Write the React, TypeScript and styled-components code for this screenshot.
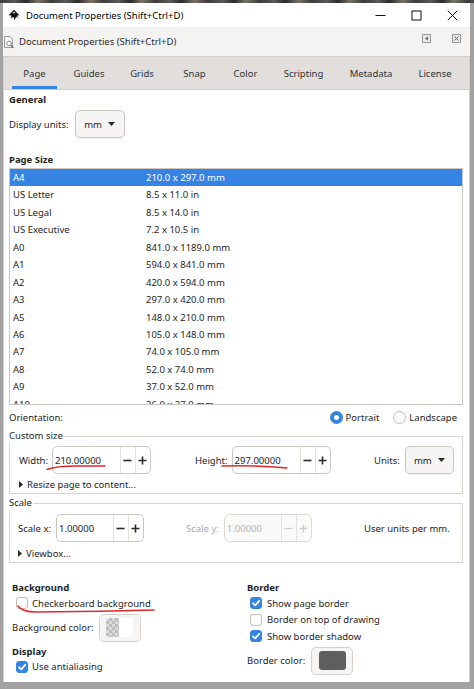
import React from "react";
import styled, { createGlobalStyle } from "styled-components";

const Global = createGlobalStyle`
  html, body { margin: 0; padding: 0; }
  body {
    width: 474px; height: 689px; overflow: hidden;
    background: #a2a2a2;
    font-family: "Noto Sans", "Open Sans", sans-serif;
    font-size: 9.5px;
    color: #1e1e1e;
  }
  #root { width: 474px; height: 689px; }
`;

const Screen = styled.div`
  position: relative;
  width: 474px;
  height: 689px;
  display: flex;
  flex-direction: column;
  background: #a2a2a2;
`;

const BackdropStrip = styled.div`
  height: 3px;
  flex: none;
  background: repeating-linear-gradient(
    90deg,
    #3c3c3c 0px, #5a5a5a 14px, #2a2a2a 26px, #7a7466 38px, #3a3a3a 52px
  );
`;

const Window = styled.div`
  flex: 1;
  min-height: 0;
  margin: 0 4px 7px 3px;
  display: flex;
  flex-direction: column;
  background: #fff;
`;

const TitleBar = styled.div`
  height: 24px;
  flex: none;
  display: flex;
  align-items: center;
  padding-left: 5px;
  background: #fff;
  color: #000;
`;

const TitleText = styled.span`
  margin-left: 6px;
  flex: 1;
`;

const WinControl = styled.div`
  width: 36px;
  height: 24px;
  display: flex;
  align-items: center;
  justify-content: center;
`;

const DockHeader = styled.div`
  height: 29px;
  flex: none;
  display: flex;
  align-items: center;
  background: #f4f3f2;
  padding-left: 0px;
  color: #2a2a2a;
`;

const DockTitle = styled.span`
  margin-left: 3px;
  flex: 1;
`;

const DockButton = styled.div<{ $gap: number }>`
  width: 9px;
  height: 9px;
  box-sizing: border-box;
  border: 1px solid #9c9a98;
  background: #e9e8e7;
  align-self: flex-start;
  margin-top: 7px;
  margin-right: ${(p) => p.$gap}px;
  display: flex;
  align-items: center;
  justify-content: center;
`;

const Notebook = styled.div`
  flex: 1;
  min-height: 0;
  display: flex;
  flex-direction: column;
  border: 1px solid #d3cfcb;
  border-bottom: none;
`;

const TabBar = styled.div`
  height: 33px;
  flex: none;
  display: flex;
  padding-left: 8px;
  background: #e1dedb;
  border-bottom: 1px solid #d3cfcb;
  box-sizing: border-box;
`;

const Tab = styled.div<{ $w: number; $active?: boolean }>`
  width: ${(p) => p.$w}px;
  flex: none;
  box-sizing: border-box;
  display: flex;
  align-items: center;
  justify-content: center;
  color: #2e3436;
  border-bottom: 3px solid ${(p) => (p.$active ? "#3584e4" : "transparent")};
  padding-top: 3px;
`;

const Content = styled.div`
  flex: 1;
  min-height: 0;
  display: flex;
  flex-direction: column;
  padding: 0 6px 0 5px;
  background: #fff;
`;

const Heading = styled.div<{ $mt: number }>`
  font-weight: 700;
  line-height: 14px;
  margin-top: ${(p) => p.$mt}px;
  color: #1e1e1e;
`;

const Row = styled.div<{ $mt?: number; $h: number; $gap?: number }>`
  display: flex;
  align-items: center;
  height: ${(p) => p.$h}px;
  margin-top: ${(p) => p.$mt ?? 0}px;
  gap: ${(p) => p.$gap ?? 0}px;
`;

const Button = styled.div<{ $w: number }>`
  width: ${(p) => p.$w}px;
  height: 28px;
  box-sizing: border-box;
  border: 1px solid #cdc7c2;
  border-radius: 5px;
  background: #f6f5f4;
  box-shadow: 0 1px 1px rgba(0, 0, 0, 0.06);
  display: flex;
  align-items: center;
  justify-content: center;
  gap: 6px;
  color: #222;
`;

const ListBox = styled.div`
  margin-top: 1px;
  height: 237px;
  flex: none;
  box-sizing: border-box;
  border: 1px solid #cdc7c2;
  overflow: hidden;
  background: #fff;
`;

const ListRow = styled.div<{ $selected?: boolean }>`
  height: 17.45px;
  line-height: 17.45px;
  display: grid;
  grid-template-columns: 133px 1fr;
  padding-left: 3px;
  background: ${(p) => (p.$selected ? "#3584e4" : "transparent")};
  color: ${(p) => (p.$selected ? "#fff" : "#1e1e1e")};
`;

const OrientationRow = styled.div`
  height: 24px;
  display: flex;
  align-items: center;
  padding-right: 6px;
`;

const Spacer = styled.div`
  flex: 1;
`;

const RadioItem = styled.div<{ $ml?: number }>`
  display: flex;
  align-items: center;
  gap: 3px;
  margin-left: ${(p) => p.$ml ?? 0}px;
`;

const Radio = styled.div<{ $checked?: boolean }>`
  width: 13px;
  height: 13px;
  box-sizing: border-box;
  border-radius: 50%;
  background: #fff;
  border: ${(p) => (p.$checked ? "4px solid #3584e4" : "1px solid #c3bdb8")};
`;

const Frame = styled.fieldset<{ $mt: number; $pt: number; $pb: number; $pl: number }>`
  margin: ${(p) => p.$mt}px 0 0 0;
  padding: ${(p) => p.$pt}px 0 ${(p) => p.$pb}px ${(p) => p.$pl}px;
  border: 1px solid #dad6d2;
  min-width: 0;
`;

const FrameLabel = styled.legend<{ $offset: number }>`
  padding: 0 1px 0 0;
  margin-left: ${(p) => p.$offset}px;
  line-height: 14px;
  color: #1e1e1e;
`;

const FieldGrid = styled.div<{ $cols: string }>`
  display: grid;
  grid-template-columns: ${(p) => p.$cols};
  align-items: center;
  height: 28px;
`;

const Field = styled.div<{ $gap: number }>`
  display: flex;
  align-items: center;
  gap: ${(p) => p.$gap}px;
`;

const FieldLabel = styled.span<{ $disabled?: boolean }>`
  color: ${(p) => (p.$disabled ? "#a9a9a9" : "#1e1e1e")};
  white-space: nowrap;
`;

const Entry = styled.div<{ $w: number; $disabled?: boolean }>`
  width: ${(p) => p.$w}px;
  height: 28px;
  box-sizing: border-box;
  border: 1px solid ${(p) => (p.$disabled ? "#dedad6" : "#cdc7c2")};
  border-radius: 5px;
  background: ${(p) => (p.$disabled ? "#fafaf9" : "#fff")};
  display: flex;
`;

const EntryText = styled.div<{ $disabled?: boolean }>`
  flex: 1;
  display: flex;
  align-items: center;
  padding-left: 2px;
  color: ${(p) => (p.$disabled ? "#b4b4b4" : "#1e1e1e")};
`;

const Spin = styled.div`
  width: 14px;
  flex: none;
  display: flex;
  align-items: center;
  justify-content: center;
  border-left: 1px solid #e6e2de;
`;

const Expander = styled.div<{ $mt: number }>`
  margin-top: ${(p) => p.$mt}px;
  height: 14px;
  display: flex;
  align-items: center;
  gap: 4px;
  color: #1e1e1e;
`;

const Columns = styled.div`
  display: grid;
  grid-template-columns: 235px 1fr;
  margin-top: 18px;
  padding-left: 3px;
`;

const Column = styled.div`
  display: flex;
  flex-direction: column;
`;

const CheckRow = styled.div<{ $indent: number; $gap: number }>`
  height: 16.5px;
  display: flex;
  align-items: center;
  padding-left: ${(p) => p.$indent}px;
  gap: ${(p) => p.$gap}px;
`;

const Check = styled.div<{ $checked?: boolean }>`
  width: 12px;
  height: 12px;
  box-sizing: border-box;
  border-radius: 3px;
  flex: none;
  display: flex;
  align-items: center;
  justify-content: center;
  background: ${(p) => (p.$checked ? "#3584e4" : "#fff")};
  border: 1px solid ${(p) => (p.$checked ? "#3584e4" : "#c3bdb8")};
`;

const ColorButton = styled.div`
  width: 42px;
  height: 28px;
  box-sizing: border-box;
  border: 1px solid #d6d1cc;
  border-radius: 5px;
  background: #f6f5f4;
  display: flex;
  align-items: center;
  justify-content: center;
`;

const Swatch = styled.div<{ $color?: string }>`
  width: 27px;
  height: 19px;
  border-radius: 3px;
  background: ${(p) =>
    p.$color
      ? p.$color
      : `linear-gradient(90deg, transparent 50%, #fff 50%),
         repeating-conic-gradient(#bdbdbd 0% 25%, #d9d9d9 0% 50%) 0 0 / 6px 6px`};
`;

const Annotations = styled.svg`
  position: absolute;
  left: 0;
  top: 0;
  width: 474px;
  height: 689px;
  pointer-events: none;
`;

const Minus = () => (
  <svg width="9" height="9" viewBox="0 0 9 9">
    <path d="M0.5 4.5 H8.5" stroke="#2a2a2a" strokeWidth="1.6" />
  </svg>
);
const Plus = () => (
  <svg width="9" height="9" viewBox="0 0 9 9">
    <path d="M0.5 4.5 H8.5 M4.5 0.5 V8.5" stroke="#2a2a2a" strokeWidth="1.6" />
  </svg>
);
const DisabledMinus = () => (
  <svg width="9" height="9" viewBox="0 0 9 9">
    <path d="M0.5 4.5 H8.5" stroke="#cfcfcf" strokeWidth="1.4" />
  </svg>
);
const DisabledPlus = () => (
  <svg width="9" height="9" viewBox="0 0 9 9">
    <path d="M0.5 4.5 H8.5 M4.5 0.5 V8.5" stroke="#cfcfcf" strokeWidth="1.4" />
  </svg>
);

const DropArrow = () => (
  <svg width="7" height="4" viewBox="0 0 7 4">
    <path d="M0 0 H7 L3.5 4 Z" fill="#2a2a2a" />
  </svg>
);

const RightTriangle = () => (
  <svg width="4" height="7" viewBox="0 0 4 7">
    <path d="M0 0 L4 3.5 L0 7 Z" fill="#2a2a2a" />
  </svg>
);

const CheckMark = () => (
  <svg width="10" height="10" viewBox="0 0 10 10">
    <path d="M2 5.3 L4.2 7.4 L8.2 2.8" stroke="#fff" strokeWidth="1.8" fill="none" strokeLinecap="round" strokeLinejoin="round" />
  </svg>
);

const InkscapeLogo = () => (
  <svg width="12" height="12" viewBox="0 0 12 12">
    <path d="M6 0.8 L11.4 6.2 L9.2 6.4 L9.8 9.4 L8.1 7.6 L6.6 11.3 L5.4 7.8 L3 9.6 L3.4 6.6 L0.6 6.2 Z" fill="#111" />
    <path d="M6 2.4 L7.6 4.2 L6.6 4 L6 4.8 L5.3 4 L4.4 4.2 Z" fill="#fff" />
  </svg>
);

const DockIcon = () => (
  <svg width="13" height="14" viewBox="0 0 13 14">
    <path d="M1.5 1.5 H7 L9.5 4 V12.5 H1.5 Z" fill="#fafafa" stroke="#9a9a9a" />
    <circle cx="6" cy="8.5" r="2.3" fill="none" stroke="#8a8a8a" strokeWidth="1" />
    <path d="M7.7 10.2 L10.5 13" stroke="#777" strokeWidth="1.4" />
  </svg>
);

const MinimizeIcon = () => (
  <svg width="11" height="11" viewBox="0 0 11 11">
    <path d="M0.5 5.5 H10.5" stroke="#111" strokeWidth="1" />
  </svg>
);
const MaximizeIcon = () => (
  <svg width="11" height="11" viewBox="0 0 11 11">
    <rect x="1" y="1" width="9" height="9" fill="none" stroke="#111" strokeWidth="1" />
  </svg>
);
const CloseIcon = () => (
  <svg width="11" height="11" viewBox="0 0 11 11">
    <path d="M0.8 0.8 L10.2 10.2 M10.2 0.8 L0.8 10.2" stroke="#111" strokeWidth="1" />
  </svg>
);

const DockLeftGlyph = () => (
  <svg width="5" height="5" viewBox="0 0 5 5">
    <path d="M4 0.5 L1 2.5 L4 4.5 Z" fill="#666" />
  </svg>
);
const DockCloseGlyph = () => (
  <svg width="5" height="5" viewBox="0 0 5 5">
    <path d="M0.5 0.5 L4.5 4.5 M4.5 0.5 L0.5 4.5" stroke="#666" strokeWidth="1" />
  </svg>
);

const tabs = [
  { label: "Page", w: 45, active: true },
  { label: "Guides", w: 64 },
  { label: "Grids", w: 42 },
  { label: "Snap", w: 63 },
  { label: "Color", w: 39 },
  { label: "Scripting", w: 77 },
  { label: "Metadata", w: 58 },
  { label: "License", w: 70 },
];

const sizes: [string, string][] = [
  ["A4", "210.0 x 297.0 mm"],
  ["US Letter", "8.5 x 11.0 in"],
  ["US Legal", "8.5 x 14.0 in"],
  ["US Executive", "7.2 x 10.5 in"],
  ["A0", "841.0 x 1189.0 mm"],
  ["A1", "594.0 x 841.0 mm"],
  ["A2", "420.0 x 594.0 mm"],
  ["A3", "297.0 x 420.0 mm"],
  ["A5", "148.0 x 210.0 mm"],
  ["A6", "105.0 x 148.0 mm"],
  ["A7", "74.0 x 105.0 mm"],
  ["A8", "52.0 x 74.0 mm"],
  ["A9", "37.0 x 52.0 mm"],
  ["A10", "26.0 x 37.0 mm"],
];

const SpinEntry: React.FC<{ w: number; value: string; disabled?: boolean }> = ({ w, value, disabled }) => (
  <Entry $w={w} $disabled={disabled}>
    <EntryText $disabled={disabled}>{value}</EntryText>
    <Spin>{disabled ? <DisabledMinus /> : <Minus />}</Spin>
    <Spin>{disabled ? <DisabledPlus /> : <Plus />}</Spin>
  </Entry>
);

const CheckItem: React.FC<{ label: string; checked?: boolean; indent: number; gap: number }> = ({
  label,
  checked,
  indent,
  gap,
}) => (
  <CheckRow $indent={indent} $gap={gap}>
    <Check $checked={checked}>{checked && <CheckMark />}</Check>
    <span>{label}</span>
  </CheckRow>
);

export default function App() {
  return (
    <>
      <Global />
      <Screen>
        <BackdropStrip />
        <Window>
          <TitleBar>
            <InkscapeLogo />
            <TitleText>Document Properties (Shift+Ctrl+D)</TitleText>
            <WinControl>
              <MinimizeIcon />
            </WinControl>
            <WinControl>
              <MaximizeIcon />
            </WinControl>
            <WinControl>
              <CloseIcon />
            </WinControl>
          </TitleBar>
          <DockHeader>
            <DockIcon />
            <DockTitle>Document Properties (Shift+Ctrl+D)</DockTitle>
            <DockButton $gap={21}>
              <DockLeftGlyph />
            </DockButton>
            <DockButton $gap={9}>
              <DockCloseGlyph />
            </DockButton>
          </DockHeader>
          <Notebook>
            <TabBar>
              {tabs.map((t) => (
                <Tab key={t.label} $w={t.w} $active={t.active}>
                  {t.label}
                </Tab>
              ))}
            </TabBar>
            <Content>
              <Heading $mt={3}>General</Heading>
              <Row $mt={3} $h={28} $gap={6}>
                <span>Display units:</span>
                <Button $w={50}>
                  <span>mm</span>
                  <DropArrow />
                </Button>
              </Row>
              <Heading $mt={15}>Page Size</Heading>
              <ListBox>
                {sizes.map(([name, size], i) => (
                  <ListRow key={name} $selected={i === 0}>
                    <span>{name}</span>
                    <span>{size}</span>
                  </ListRow>
                ))}
              </ListBox>
              <OrientationRow>
                <span>Orientation:</span>
                <Spacer />
                <RadioItem>
                  <Radio $checked />
                  <span>Portrait</span>
                </RadioItem>
                <RadioItem $ml={14}>
                  <Radio />
                  <span>Landscape</span>
                </RadioItem>
              </OrientationRow>
              <Frame $mt={0} $pt={3} $pb={2} $pl={9}>
                <FrameLabel $offset={-10}>Custom size</FrameLabel>
                <FieldGrid $cols="176px 179px auto">
                  <Field $gap={4}>
                    <FieldLabel>Width:</FieldLabel>
                    <SpinEntry w={99} value="210.00000" />
                  </Field>
                  <Field $gap={4}>
                    <FieldLabel>Height:</FieldLabel>
                    <SpinEntry w={99} value="297.00000" />
                  </Field>
                  <Field $gap={5}>
                    <FieldLabel>Units:</FieldLabel>
                    <Button $w={49}>
                      <span>mm</span>
                      <DropArrow />
                    </Button>
                  </Field>
                </FieldGrid>
                <Expander $mt={3}>
                  <RightTriangle />
                  <span>Resize page to content...</span>
                </Expander>
              </Frame>
              <Frame $mt={2} $pt={4} $pb={2} $pl={8}>
                <FrameLabel $offset={-9}>Scale</FrameLabel>
                <FieldGrid $cols="168px 178px auto">
                  <Field $gap={5}>
                    <FieldLabel>Scale x:</FieldLabel>
                    <SpinEntry w={88} value="1.00000" />
                  </Field>
                  <Field $gap={5}>
                    <FieldLabel $disabled>Scale y:</FieldLabel>
                    <SpinEntry w={88} value="1.00000" disabled />
                  </Field>
                  <FieldLabel>User units per mm.</FieldLabel>
                </FieldGrid>
                <Expander $mt={4}>
                  <RightTriangle />
                  <span>Viewbox...</span>
                </Expander>
              </Frame>
              <Columns>
                <Column>
                  <Heading $mt={0}>Background</Heading>
                  <CheckItem label="Checkerboard background" indent={4} gap={4} />
                  <Row $mt={2} $h={28} $gap={5}>
                    <span>Background color:</span>
                    <ColorButton>
                      <Swatch />
                    </ColorButton>
                  </Row>
                  <Heading $mt={3}>Display</Heading>
                  <CheckItem label="Use antialiasing" checked indent={4} gap={4} />
                </Column>
                <Column>
                  <Heading $mt={0}>Border</Heading>
                  <CheckItem label="Show page border" checked indent={3} gap={5} />
                  <CheckItem label="Border on top of drawing" indent={3} gap={5} />
                  <CheckItem label="Show border shadow" checked indent={3} gap={5} />
                  <Row $mt={2} $h={28} $gap={6}>
                    <span>Border color:</span>
                    <ColorButton>
                      <Swatch $color="#5e5e5e" />
                    </ColorButton>
                  </Row>
                </Column>
              </Columns>
            </Content>
          </Notebook>
        </Window>
        <Annotations viewBox="0 0 474 689">
          <path d="M47 469.5 Q 56 466 76 466 T 105 466" stroke="#e3262b" strokeWidth="1.4" fill="none" strokeLinecap="round" />
          <path d="M222 466 Q 255 465 287 468" stroke="#e3262b" strokeWidth="1.4" fill="none" strokeLinecap="round" />
          <path d="M18 606 Q 22 612 36 612 L 100 611.3 Q 130 610.5 154 610" stroke="#e3262b" strokeWidth="1.4" fill="none" strokeLinecap="round" />
        </Annotations>
      </Screen>
    </>
  );
}
